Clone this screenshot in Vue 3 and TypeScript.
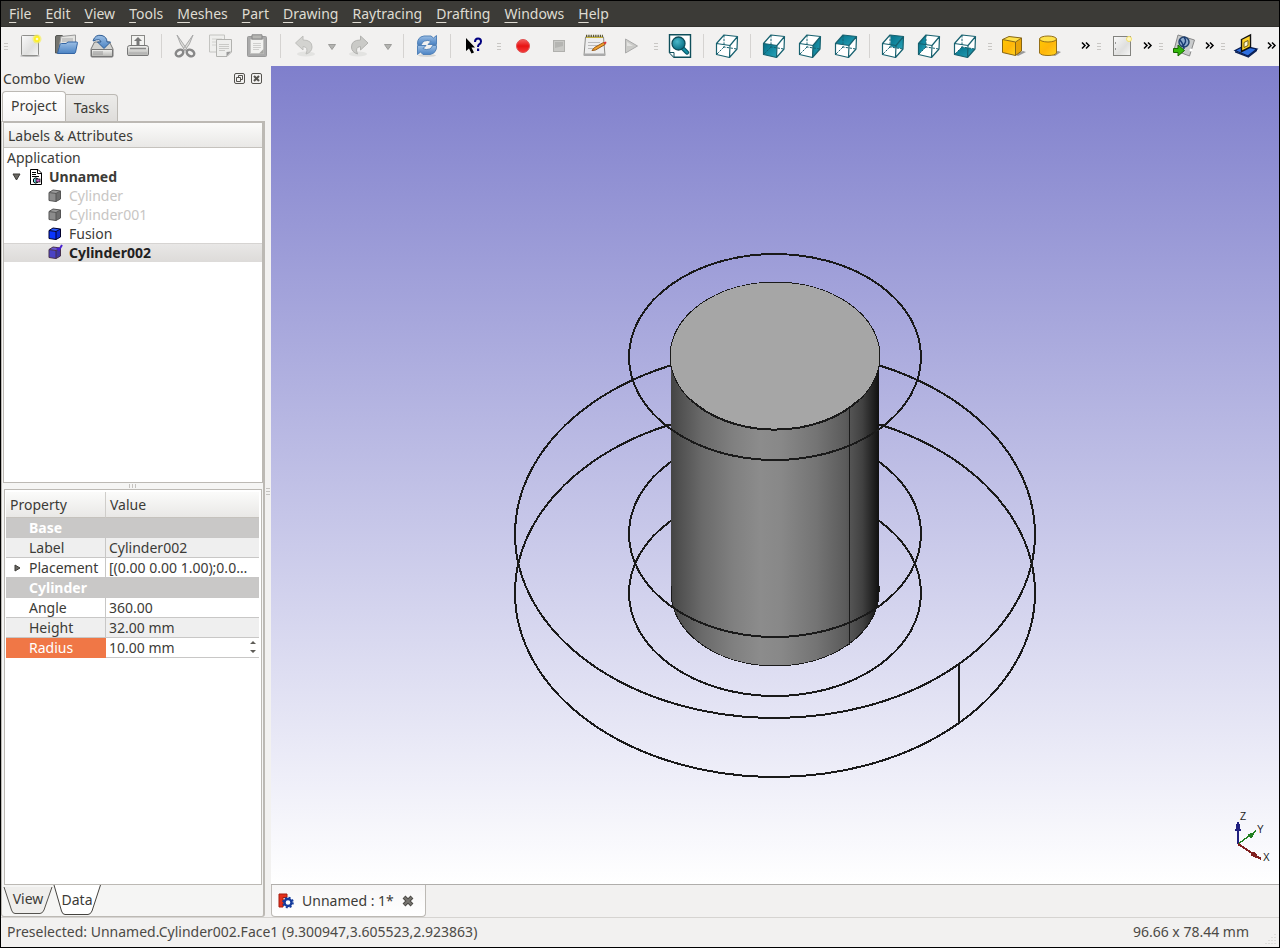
<script setup lang="ts">
import { ref } from 'vue'

type Item = { kind: 'button' | 'sep' | 'handle' | 'drop' | 'more' | 'space'; icon?: string; label?: string }

const b = (icon: string, label: string): Item => ({ kind: 'button', icon, label })
const sep: Item = { kind: 'sep' }
const handle: Item = { kind: 'handle' }
const drop: Item = { kind: 'drop', label: 'History' }
const more: Item = { kind: 'more', label: 'More tools' }

const menus = ['File', 'Edit', 'View', 'Tools', 'Meshes', 'Part', 'Drawing', 'Raytracing', 'Drafting', 'Windows', 'Help']

const mainTools: Item[] = [
  handle, b('new', 'New'), b('open', 'Open'), b('save', 'Save'), b('print', 'Print'), sep,
  b('cut', 'Cut'), b('copy', 'Copy'), b('paste', 'Paste'), sep,
  b('undo', 'Undo'), drop, b('redo', 'Redo'), drop, sep,
  b('refresh', 'Refresh'), sep, b('whats', "What's this?"), handle,
  b('record', 'Record macro'), b('stop', 'Stop macro'), b('macros', 'Macros'), b('play', 'Run macro'), handle,
  b('fit', 'Fit all'), sep, b('axo', 'Axonometric'), sep,
  b('front', 'Front'), b('right', 'Right'), b('top', 'Top'), sep,
  b('rear', 'Rear'), b('left', 'Left'), b('bottom', 'Bottom'),
]
const sideTools: Item[] = [
  handle, b('box', 'Box'), b('cylinder', 'Cylinder'), { kind: 'space' }, more,
  handle, b('page', 'New drawing'), more,
  handle, b('pov', 'Raytracing export'), more,
  handle, b('sketch', 'Sketch'), more,
]

const faces: Record<string, string> = {
  axo: '',
  front: '1.5,9.5 15,11.5 14.5,23.5 1.5,20.5',
  right: '15,11.5 22.5,2.5 22,15 14.5,23.5',
  top: '1.5,9.5 9,1 22.5,2.5 15,11.5',
  rear: '9.5,1 22.5,2.5 22,15 9.5,12.5',
  left: '1.5,9.5 9,1 9,13 1.5,20.5',
  bottom: '9,13 22,15 14.5,23.5 1.5,20.5',
}
const cube = (name: string) =>
  `<path d="M1.5 9.5L9 1L22.5 2.5L22 15L14.5 23.5L1.5 20.5Z" fill="#fff"/>` +
  (faces[name] ? `<polygon points="${faces[name]}" fill="url(#gTeal)"/>` : '') +
  `<path d="M9 1V13L22 15M9 13L1.5 20.5" fill="none" stroke="#17616f" stroke-dasharray="2.5 1.2"/>
  <path d="M1.5 9.5L9 1L22.5 2.5L22 15L14.5 23.5L1.5 20.5ZM1.5 9.5L15 11.5L22.5 2.5M15 11.5L14.5 23.5" fill="none" stroke="#17616f" stroke-width="1.2" stroke-linejoin="round"/>`

const icons: Record<string, string> = {
  new: `<ellipse cx="12" cy="22" rx="10" ry="1" fill="#bbb"/><rect x="3.5" y="1.5" width="17" height="20" rx="1" fill="url(#gPage)" stroke="#8f8f8c"/><circle cx="19" cy="5" r="4.5" fill="#f6ef5c" opacity=".7"/><circle cx="19" cy="5" r="3" fill="#fff022"/><circle cx="19" cy="5" r="1.3" fill="#fffbd0"/>`,
  open: `<path d="M1.5 19V3Q1.500 1.500 3 1.500H8L10 3H20V19Z" fill="#74746f" stroke="#555753"/><path d="M7 2.500L21.500 1V14H5Z" fill="#e4e4e1" stroke="#999"/><path d="M8 5H19M8 7H19" stroke="#aaa"/><path d="M3.500 19.500L6 10.500Q6.300 9.500 7.500 9.500H12L14 8H22.500Q23.800 8 23.400 9.200L21.500 18.500Q21.200 19.500 20 19.500Z" fill="url(#gBlue)" stroke="#3465a4"/>`,
  save: `<path d="M1 15L4.500 8H19.500L23 15V22Q23 23 22 23H2Q1 23 1 22Z" fill="#d3d3d0" stroke="#777"/><path d="M1.500 15.500H22.500V22.500H1.500Z" fill="url(#gMetal)" stroke="#777"/><path d="M4 17V21M6 17V21M8 17V21M10 17V21M12 17V21" stroke="#999"/><path d="M3 7Q5 0 12 1.500Q17 3 17 8H20.500L14 14.500L7.500 8H11Q10.500 4 3 7Z" fill="url(#gBlue)" stroke="#2f5d94"/>`,
  print: `<rect x="5.500" y="1.500" width="13" height="12" fill="#f3f3f1" stroke="#8a8a87"/><path d="M12 3L16 7H13.500V11H10.500V7H8Z" fill="#777"/><path d="M1.500 13.500Q1.500 11.500 4 11.500H20Q22.500 11.500 22.500 13.500V20.500Q22.500 21.500 21 21.500H3Q1.500 21.500 1.500 20.500Z" fill="url(#gMetal)" stroke="#777"/><path d="M4 14.500H20" stroke="#888" stroke-width="1.500"/><path d="M3 19H21" stroke="#aaa"/>`,
  cut: `<path d="M4 1L14.500 16L12.500 17Q7 11 4 1ZM20 1L9.500 16L11.500 17Q17 11 20 1Z" fill="#dededb" stroke="#aaa"/><ellipse cx="6.500" cy="19" rx="4" ry="3" transform="rotate(-30 6.500 19)" fill="none" stroke="#888" stroke-width="2.400"/><ellipse cx="17.500" cy="19" rx="4" ry="3" transform="rotate(30 17.500 19)" fill="none" stroke="#888" stroke-width="2.400"/>`,
  copy: `<path d="M.5 1H15.500V18H.5Z" fill="#efefed" stroke="#c4c4c1"/><path d="M3 5H13M3 8H13M3 11H13" stroke="#d2d2cf"/><path d="M7.500 5.500H22.500V18L18 22.500H7.500Z" fill="#eeeeec" stroke="#b2b2af"/><path d="M10 10.500H20M10 12.500H20M10 14.500H20M10 16.500H16" stroke="#c9c9c6"/><path d="M22 17.500L17.500 22.500V18Z" fill="#999"/>`,
  paste: `<rect x="2.500" y="2.500" width="19" height="20" rx="1" fill="#aaa" stroke="#999"/><path d="M5.500 5.500H18.500V19.500H5.500Z" fill="#f2f2f0" stroke="#c4c4c2"/><path d="M7 .8H17V5H7Z" fill="#b6b6b3" stroke="#888"/><path d="M8 9.500H16M8 11.500H16M8 13.500H16M8 15.500H14" stroke="#cfcfcd"/><path d="M18.500 15L14 19.500H18.500Z" fill="#a5a5a2"/>`,
  undo: `<ellipse cx="14" cy="20" rx="9" ry="2.500" fill="#e3e3e1"/><path d="M3.500 9L11 2V6Q20 6 20 13Q20 18 14 20Q17 13 11 12.500V16Z" fill="#d3d3d0" stroke="#bebebb"/>`,
  redo: `<ellipse cx="10" cy="20" rx="9" ry="2.500" fill="#e3e3e1"/><path d="M20 9L12.500 2V6Q3.500 6 3.500 13Q3.500 18 9.500 20Q6.500 13 12.500 12.500V16Z" fill="#cacac7" stroke="#b2b2af"/>`,
  refresh: `<ellipse cx="12" cy="21.500" rx="9" ry="1.500" fill="#d6d6d4"/><path d="M2.500 10.500Q2 3 9 2H16L18.500 4L21.500 1.500V10.500H13L16 7.500Q13 5.500 9.500 7Q7 8 6.500 10.500Z" fill="url(#gBlue)" stroke="#5282b8"/><path d="M21.500 11.500Q22 19 15 20.500H8L5.500 18L2.500 20.500V11.500H11L8 14.500Q11 16.500 14.500 15Q17 14 17.500 11.500Z" fill="url(#gBlue)" stroke="#5282b8"/>`,
  whats: `<path d="M4 4V17L7 14.500L9.500 19.500L12 18.500L9.500 13.500H13Z" fill="#000"/><path d="M13 8Q13 4.500 16 4.500Q19 4.500 19 7.500Q19 9.500 17 10.500Q16 11.300 16 13" fill="none" stroke="#000080" stroke-width="2"/><rect x="15" y="14.500" width="2.200" height="2.500" fill="#000080"/>`,
  record: `<circle cx="12" cy="12" r="6.500" fill="url(#gRed)" stroke="#e05252"/>`,
  stop: `<rect x="6.500" y="6.500" width="11" height="11" fill="#c9c9c6" stroke="#b0b0ad"/><path d="M8 8H16V12L8 14Z" fill="#b5b5b2"/>`,
  macros: `<path d="M2.500 3H20.500L22 21.500H1Z" fill="#eee" stroke="#8c8c89"/><path d="M1 19.500H22V22H1Z" fill="#aaa"/><path d="M3 2H20" stroke="#5a542c" stroke-width="2.400" stroke-dasharray="1.300 1"/><path d="M3 3.500H20" stroke="#c5b23c"/><path d="M5 8.500H17M5 11.500H15M5 14.500H11" stroke="#bbb"/><path d="M9 16.500L11.500 13.500L20.500 8.500L22 10.500L12.500 16Z" fill="#f3a32b" stroke="#96581a"/><path d="M20.500 8.500L23 7.500L23.500 9L22 10.500Z" fill="#d33"/>`,
  play: `<path d="M6.500 5V19L18.500 12Z" fill="#cbcbc8" stroke="#aaa"/><path d="M8 8L14 12H8Z" fill="#e2e2e0"/>`,
  fit: `<path d="M1.500 .8H22.500V23.200H6L1.500 18.500Z" fill="#fff" stroke="#0f4f5b" stroke-width="1.400"/><path d="M1.500 18.500H6V23" fill="#fff" stroke="#0f4f5b"/><path d="M14.500 14L19 18.500" stroke="#0c5d6d" stroke-width="4.500" stroke-linecap="round"/><path d="M15 14.500L19 18.500" stroke="#1590a5" stroke-width="2" stroke-linecap="round"/><circle cx="10.500" cy="9.500" r="6.500" fill="url(#gBall)" stroke="#0c4b59" stroke-width="1.300"/>`,
  box: `<path d="M14 20L22 17L25 18L17 22Z" fill="#999"/><path d="M1.500 5.500L14.500 8V21.500L1.500 18.500Z" fill="url(#gGold)"/><path d="M14.500 8L20.500 4V17L14.500 21.500Z" fill="#e8a409"/><path d="M1.500 5.500L8 2.500L20.500 4L14.500 8Z" fill="#ffe14a"/><path d="M1.500 5.500L8 2.500L20.500 4V17L14.500 21.500L1.500 18.500ZM1.500 5.500L14.500 8L20.500 4M14.500 8V21.500" fill="none" stroke="#866514" stroke-linejoin="round"/>`,
  cylinder: `<path d="M12 20L21 17L24 18L18 22Z" fill="#999"/><path d="M2.500 5V19Q4 21.500 11 21.500Q18 21.500 19.500 19V5Z" fill="url(#gGold)" stroke="#967017"/><ellipse cx="11" cy="5" rx="8.500" ry="3" fill="#ffe14a" stroke="#967017"/>`,
  page: `<rect x="3.500" y="2.500" width="17" height="19" fill="url(#gPage)" stroke="#83837f"/><path d="M5.500 8V10M5.500 14V16" stroke="#999"/><circle cx="19" cy="5" r="2.500" fill="#fdf8c8" stroke="#f3df68"/>`,
  pov: `<path d="M6 1L22.500 6L17.500 22L2 16Z" fill="#c9cbcc" stroke="#888"/><circle cx="12" cy="8" r="5" fill="#8caace" stroke="#24436d" stroke-width="1.500"/><path d="M12 3Q16 8 10 12.500M8 6Q12 11 12 15" fill="none" stroke="#183b73" stroke-width="1.500"/><circle cx="19" cy="16" r="1.500" fill="#fff"/><path d="M1.500 14.500H6V11L12.500 16.500L6 22V18.500H1.500Z" fill="#32b70a" stroke="#176600"/>`,
  sketch: `<path d="M1 16.500L10 12L23 15L14 22Z" fill="#2e6fe0" stroke="#071d52" stroke-width="1.300"/><path d="M1 17L14 22V23.500L1 18.500ZM14 22L23 15V17L14 24Z" fill="#0c2258"/><path d="M7.500 5.500L16.500 .8V13L7.500 17.500Z" fill="#ffd428" stroke="#111" stroke-width="1.400"/><path d="M10 8.500L14 6.500V11.500L10 13.500Z" fill="#fff9cf" stroke="#6f5d10"/>`,
}
Object.keys(faces).forEach((n) => { icons[n] = cube(n) })

const tree = [
  { name: 'Cylinder', cls: 'hiddenobj', top: '#9a9a9a', front: '#8c8c8c', side: '#6e6e6e', edge: '#555' },
  { name: 'Cylinder001', cls: 'hiddenobj', top: '#9a9a9a', front: '#8c8c8c', side: '#6e6e6e', edge: '#555' },
  { name: 'Fusion', cls: '', top: '#2e5cff', front: '#0a35ff', side: '#0a2bd8', edge: '#00002c' },
  { name: 'Cylinder002', cls: 'selected', top: '#6a5ad0', front: '#4b43c4', side: '#4038a0', edge: '#47304e' },
]
const radius = ref('10.00 mm')
</script>

<template>
  <div class="window">
    <svg class="defs" width="0" height="0" aria-hidden="true">
      <defs>
        <linearGradient id="gTeal" x1="0" y1="0" x2="1" y2="1"><stop offset="0" stop-color="#066f87" /><stop offset=".5" stop-color="#1489a0" /><stop offset="1" stop-color="#2aa3b8" /></linearGradient>
        <linearGradient id="gPage" x1="0" y1="0" x2="1" y2="1"><stop offset="0" stop-color="#fafafa" /><stop offset=".6" stop-color="#dfdfde" /><stop offset="1" stop-color="#f6f6f6" /></linearGradient>
        <linearGradient id="gBlue" x1="0" y1="0" x2="0" y2="1"><stop offset="0" stop-color="#9dbfe4" /><stop offset="1" stop-color="#4b83c4" /></linearGradient>
        <linearGradient id="gMetal" x1="0" y1="0" x2="0" y2="1"><stop offset="0" stop-color="#f2f2f0" /><stop offset="1" stop-color="#b5b5b2" /></linearGradient>
        <linearGradient id="gRed" x1="0" y1="0" x2="0" y2="1"><stop offset="0" stop-color="#f46060" /><stop offset=".5" stop-color="#e81313" /><stop offset="1" stop-color="#f33a3a" /></linearGradient>
        <radialGradient id="gBall" cx=".4" cy=".35" r=".7"><stop offset="0" stop-color="#49b8cb" /><stop offset="1" stop-color="#06697e" /></radialGradient>
        <linearGradient id="gGold" x1="0" y1="0" x2="1" y2="1"><stop offset="0" stop-color="#ffc800" /><stop offset=".5" stop-color="#ffb60a" /><stop offset="1" stop-color="#ffd21e" /></linearGradient>
      </defs>
    </svg>

    <nav class="menubar">
      <button v-for="m in menus" :key="m" type="button"><u>{{ m[0] }}</u>{{ m.slice(1) }}</button>
    </nav>

    <div class="toolbar">
      <div v-for="(group, g) in [mainTools, sideTools]" :key="g" class="group" :class="g ? 'side' : 'primary'">
        <template v-for="(t, i) in group" :key="i">
          <button v-if="t.kind === 'button'" type="button" class="tool" :aria-label="t.label">
            <svg width="24" height="24" viewBox="0 0 24 24" v-html="icons[t.icon!]" />
          </button>
          <button v-else-if="t.kind === 'drop'" type="button" class="drop" :aria-label="t.label">
            <svg width="8" height="6" viewBox="0 0 8 6"><path d="M.5 .5H7.500L4 5.500Z" fill="#b4b4b1" stroke="#9c9c99" /></svg>
          </button>
          <button v-else-if="t.kind === 'more'" type="button" class="more" :aria-label="t.label">
            <svg width="9" height="7" viewBox="0 0 9 7"><path d="M1 .5L4 3.500L1 6.500M5 .5L8 3.500L5 6.500" fill="none" stroke="#000" stroke-width="1.500" /></svg>
          </button>
          <span v-else :class="t.kind"></span>
        </template>
      </div>
    </div>

    <main class="body">
      <aside class="dock">
        <header class="dock-title">
          <span>Combo View</span>
          <button type="button" aria-label="Float">
            <svg width="11" height="11" viewBox="0 0 11 11" fill="none" stroke="#55534e"><rect x=".5" y=".5" width="10" height="10" rx="1.500" /><path d="M4.500 4.500V2.500H8.500V6.500H6.500M2.500 4.500H6.500V8.500H2.500Z" /></svg>
          </button>
          <button type="button" aria-label="Close">
            <svg width="11" height="11" viewBox="0 0 11 11" fill="none" stroke="#55534e"><rect x=".5" y=".5" width="10" height="10" rx="1.500" /><path d="M3 3L8 8M8 3L3 8" stroke-width="2" /></svg>
          </button>
        </header>
        <div class="tabs" role="tablist">
          <button type="button" role="tab" class="tab active" aria-selected="true">Project</button>
          <button type="button" role="tab" class="tab" aria-selected="false">Tasks</button>
        </div>
        <section class="pane">
          <div class="tree" role="tree">
            <div class="head">Labels &amp; Attributes</div>
            <div class="row root" role="treeitem">Application</div>
            <div class="row doc" role="treeitem" aria-expanded="true">
              <svg class="twist" width="9" height="8" viewBox="0 0 9 8"><path d="M1 1H8L4.500 7Z" fill="#6a6863" stroke="#3c3b37" /></svg>
              <svg width="12" height="16" viewBox="0 0 12 16"><path d="M.5 .5H8L11.500 4V15.500H.5Z" fill="#fff" stroke="#000" /><path d="M7.500 1V4.500H11M2 3.500H6M2 5.500H6M2 7.500H9" fill="none" stroke="#000" /><path d="M7.500 9.500Q5 8 3.500 10V13Q5 15 7.500 13.500Z" fill="#6de0e6" stroke="#000" /><rect x="6" y="10" width="4" height="3" fill="#cc66c8" stroke="#000" stroke-width=".7" /></svg>
              <span>Unnamed</span>
            </div>
            <div v-for="o in tree" :key="o.name" class="row obj" :class="o.cls" role="treeitem">
              <svg width="14" height="14" viewBox="0 0 14 14">
                <path d="M1 3.500L8 4.500V12.500L1 11.500Z" :fill="o.front" />
                <path d="M8 4.500L12.500 2V10L8 12.500Z" :fill="o.side" />
                <path d="M1 3.500L5 1L12.500 2L8 4.500Z" :fill="o.top" />
                <path d="M1 3.500L5 1L12.500 2V10L8 12.500L1 11.500ZM1 3.500L8 4.500L12.500 2M8 4.500V12.500" fill="none" :stroke="o.edge" />
                <path v-if="o.cls === 'selected'" d="M9 2L11 4L14 -1" fill="none" stroke="#4a22cf" stroke-width="2" />
              </svg>
              <span>{{ o.name }}</span>
            </div>
          </div>
          <div class="split-h"><i></i><i></i><i></i></div>
          <div class="props">
            <table>
              <colgroup><col class="c1"><col></colgroup>
              <thead><tr><th>Property</th><th>Value</th></tr></thead>
              <tbody>
                <tr class="cat"><td colspan="2">Base</td></tr>
                <tr class="alt"><td>Label</td><td>Cylinder002</td></tr>
                <tr>
                  <td class="expand"><svg width="7" height="8" viewBox="0 0 7 8"><path d="M1 1V7L6 4Z" fill="#6a6863" stroke="#3c3b37" /></svg>Placement</td>
                  <td>[(0.00 0.00 1.00);0.0…</td>
                </tr>
                <tr class="cat"><td colspan="2">Cylinder</td></tr>
                <tr><td>Angle</td><td>360.00</td></tr>
                <tr class="alt"><td>Height</td><td>32.00 mm</td></tr>
                <tr class="edit">
                  <td><label for="radius">Radius</label></td>
                  <td>
                    <div class="spin">
                      <input id="radius" v-model="radius" type="text">
                      <svg width="6" height="12" viewBox="0 0 6 12"><path d="M0 3L3 0L6 3ZM0 9L3 12L6 9Z" fill="#5e5c57" /></svg>
                    </div>
                  </td>
                </tr>
              </tbody>
            </table>
          </div>
          <div class="sheet-tabs" role="tablist">
            <button type="button" role="tab" class="sheet" aria-selected="false">
              <svg width="50" height="29" viewBox="0 0 50 29"><path d="M1 2L8.500 25Q9.500 28.500 12 28.500H37Q39.500 28.500 41 25L49 2" fill="#efeeec" stroke="#55534f" /></svg><span>View</span>
            </button>
            <button type="button" role="tab" class="sheet front" aria-selected="true">
              <svg width="50" height="30" viewBox="0 0 50 30"><path d="M2 0L9.500 26Q10.500 29.500 13 29.500H36Q38.500 29.500 40 26L48.500 0" fill="#fff" stroke="#45433f" /></svg><span>Data</span>
            </button>
          </div>
        </section>
      </aside>
      <div class="split-v"><i></i><i></i><i></i></div>
      <section class="mdi">
        <div class="viewport">
          <svg class="scene" viewBox="0 0 1008 818" shape-rendering="crispEdges" fill="none" stroke="#1a1a1a" stroke-width="2">
            <defs>
              <linearGradient id="gBody">
                <stop offset="0" stop-color="#444" /><stop offset=".04" stop-color="#505050" /><stop offset=".15" stop-color="#6a6a6a" /><stop offset=".3" stop-color="#808080" />
                <stop offset=".43" stop-color="#8c8c8c" /><stop offset=".53" stop-color="#888" /><stop offset=".7" stop-color="#747474" /><stop offset=".84" stop-color="#5b5b5b" />
                <stop offset=".92" stop-color="#414141" /><stop offset="1" stop-color="#101010" />
              </linearGradient>
            </defs>
            <ellipse cx="504" cy="468" rx="260" ry="184" />
            <ellipse cx="504" cy="527" rx="260" ry="184" />
            <path d="M688 599V657" />
            <ellipse cx="504" cy="291" rx="146" ry="103" />
            <ellipse cx="504" cy="468" rx="146" ry="103" />
            <ellipse cx="504" cy="527" rx="146" ry="103" />
            <path d="M400 291V526A104 74 0 0 0 608 526V291Z" fill="url(#gBody)" stroke="none" />
            <path d="M400 520V526A104 74 0 0 0 608 526V520M578 342V579" stroke-width="1" />
            <ellipse cx="504" cy="290" rx="105" ry="74" fill="#a6a6a6" stroke-width="1" />
            <path d="M420 334A105 74 0 0 0 588 334" />
            <path d="M358 291A146 103 0 0 0 650 291M358 468A146 103 0 0 0 650 468" />
          </svg>
          <svg class="axes" width="40" height="56" viewBox="0 0 40 56" shape-rendering="crispEdges">
            <path d="M8 35V14" stroke="#202080" stroke-width="2" /><path d="M5 22L7 13H9L11 22Z" fill="#202080" />
            <path d="M8 35L26 22" stroke="#208020" stroke-width="1.500" /><path d="M17 26L26 22L21 30Z" fill="#208020" />
            <path d="M8 35L31 50" stroke="#802020" stroke-width="2" /><path d="M20 46L24 42L31 51Z" fill="#802020" />
            <g fill="#222"><text x="10" y="11">Z</text><text x="27" y="24">Y</text><text x="33" y="52">X</text></g>
          </svg>
        </div>
        <div class="doc-tabs">
          <div class="doc-tab">
            <svg width="16" height="16" viewBox="0 0 16 16"><path d="M1 1H9V4.500H5V7H8V10H5V14H1Z" fill="#e5301b" stroke="#a31c10" /><circle cx="10" cy="9.500" r="3.500" fill="#fff" stroke="#153c9d" stroke-width="2.400" /><circle cx="10" cy="9.500" r="5" fill="none" stroke="#153c9d" stroke-width="1.600" stroke-dasharray="2 1.930" /></svg>
            <span>Unnamed : 1*</span>
            <button type="button" aria-label="Close document">
              <svg width="12" height="12" viewBox="0 0 12 12"><path d="M2 2L10 10M10 2L2 10" stroke="#4b4945" stroke-width="4" /><path d="M2.500 2.500L9.500 9.500M9.500 2.500L2.500 9.500" stroke="#777570" stroke-width="2" /></svg>
            </button>
          </div>
        </div>
      </section>
    </main>

    <footer class="status">
      <span>Preselected: Unnamed.Cylinder002.Face1 (9.300947,3.605523,2.923863)</span>
      <span>96.66 x 78.44 mm</span>
      <svg class="grip" width="12" height="12" viewBox="0 0 12 12"><path d="M10 1V2M7 4V5M10 4V5M4 7V8M7 7V8M10 7V8M1 10V11M4 10V11M7 10V11M10 10V11" stroke="#cac8c5" /></svg>
    </footer>
  </div>
</template>

<style>
body { margin: 0; }
</style>

<style scoped>
* { box-sizing: border-box; }
button, input { font: inherit; color: inherit; border: 0; background: none; padding: 0; margin: 0; }
svg { display: block; flex: none; overflow: visible; }
.defs { position: absolute; }
.window {
  display: flex; flex-direction: column; height: 100vh; border: 1px solid #000;
  background: #f2f1f0; color: #3c3b37; font: 14px/19px "Noto Sans", "Open Sans", sans-serif;
}
.menubar { display: flex; align-items: center; gap: 2px; height: 26px; flex: none; background: #3c3b37; color: #dfdbd2; border-bottom: 1px solid #32312d; padding-left: 2px; }
.menubar button { padding: 0 6px; white-space: nowrap; }
.menubar u { text-underline-offset: 3px; }
.toolbar { display: flex; justify-content: space-between; height: 39px; flex: none; padding-bottom: 2px; }
.group { display: flex; align-items: center; flex: none; }
.primary { margin-left: -2px; }
.side { margin-right: 2px; }
.tool { display: flex; justify-content: center; width: 36px; }
.drop { display: flex; justify-content: center; width: 20px; padding-top: 2px; }
.more { display: flex; justify-content: center; width: 14px; }
.space { width: 11px; }
.sep { width: 11px; height: 24px; background: linear-gradient(#d5d3d1, #d5d3d1) 5px 0 / 1px 100% no-repeat; }
.handle { width: 13px; height: 8px; background: repeating-linear-gradient(#c9c7c4 0 1px, transparent 1px 3px) 5px 1px / 4px 7px no-repeat; }
.side .handle { width: 12px; }
.body { display: flex; flex: 1; min-height: 0; }
.dock { display: flex; flex-direction: column; width: 264px; flex: none; }
.dock-title { display: flex; align-items: center; gap: 6px; height: 25px; padding: 0 3px 0 2px; flex: none; }
.dock-title span { flex: 1; }
.tabs { display: flex; align-items: flex-end; height: 30px; flex: none; padding-left: 1px; }
.tab { height: 27px; padding: 0 8px 2px; border: 1px solid #bcb9b4; border-bottom: 0; border-left: 0; border-radius: 0 4px 0 0; background: linear-gradient(#ecebe9, #dfdddb); }
.tab.active { height: 30px; border-left: 1px solid #bcb9b4; border-radius: 4px 4px 0 0; background: linear-gradient(#fff, #f7f6f6); }
.pane { display: flex; flex-direction: column; flex: 1; min-height: 0; border: 1px solid #bcb9b4; border-right-width: 2px; border-radius: 0 0 3px 3px; background: #f5f5f4; }
.tree { flex: 362 1 0; margin: 0 0 0 1px; border: 1px solid #bcb9b4; background: #fff; min-height: 0; }
.head { height: 25px; padding: 3px 4px; border-bottom: 1px solid #c5c2bd; background: linear-gradient(#fbfbfa, #e9e8e6); }
.row { display: flex; align-items: center; height: 19px; }
.root { padding-left: 3px; }
.doc { padding-left: 8px; font-weight: bold; gap: 7px; }
.doc .twist { margin-right: 2px; }
.obj { padding-left: 44px; gap: 7px; }
.hiddenobj { color: #c8c6c4; }
.selected { font-weight: bold; background: linear-gradient(#e9e8e7, #dddbd9); color: #22211f; box-shadow: inset 0 1px #d6d4d2; }
.split-h { display: flex; justify-content: center; align-items: center; gap: 2px; height: 6px; flex: none; }
.split-h i { width: 1px; height: 4px; background: #c5c3c0; }
.props { flex: 395 1 0; margin: 0 1px 0 2px; border: 1px solid #bcb9b4; padding: 2px 2px 1px 1px; background: #fff; min-height: 0; }
table { width: 100%; table-layout: fixed; border-collapse: separate; border-spacing: 0; }
.c1 { width: 100px; }
th { height: 26px; padding: 0 4px; text-align: left; font-weight: normal; border-bottom: 1px solid #c5c2bd; background: linear-gradient(#fbfbfa, #e9e8e6); }
th:first-child { border-right: 1px solid #cfcdca; }
td { height: 20px; line-height: 19px; padding: 0 3px; border-bottom: 1px solid #c8c7c6; white-space: nowrap; }
td:first-child { padding: 0 0 0 23px; border-right: 1px solid #c8c7c6; }
.alt td { background: #efefef; }
.cat td { background: #c9c8c7; color: #fff; font-weight: bold; }
.expand svg { float: left; margin: 6px 0 0 -15px; }
.edit td:first-child { background: #f07746; color: #fff; border-color: #f07746; }
.spin { display: flex; align-items: center; justify-content: space-between; height: 19px; }
.spin input { width: 120px; height: 19px; outline: 0; }
.sheet-tabs { display: flex; height: 31px; flex: none; padding-left: 1px; align-items: flex-start; }
.sheet { display: grid; width: 49px; }
.sheet svg, .sheet span { grid-area: 1 / 1; }
.sheet span { align-self: center; z-index: 1; padding-bottom: 2px; }
.split-v { display: flex; flex-direction: column; align-items: center; justify-content: center; gap: 2px; width: 6px; flex: none; }
.split-v i { width: 4px; height: 1px; background: #c5c3c0; }
.mdi { display: flex; flex-direction: column; flex: 1; min-width: 0; }
.viewport { position: relative; flex: 1; min-height: 0; background: linear-gradient(#7f7fcc, #fff); }
.scene { width: 100%; height: 100%; }
.axes { position: absolute; right: 9px; bottom: 19px; font: 10px/10px "Liberation Sans", sans-serif; }
.doc-tabs { height: 33px; flex: none; display: flex; border-top: 1px solid #b0aeab; }
.doc-tab { display: flex; align-items: center; width: 155px; height: 32px; padding: 0 6px; border: 1px solid #bcb9b4; border-top: 0; border-radius: 0 0 4px 4px; background: linear-gradient(#f7f6f6, #fff); }
.doc-tab span { flex: 1; padding-left: 8px; }
.doc-tab button { margin-right: 5px; }
.status { display: flex; align-items: center; height: 30px; flex: none; border-top: 1px solid #d6d4d1; padding: 0 0 2px 6px; color: #4c4a46; }
.status span:first-child { flex: 1; }
.grip { align-self: flex-end; margin: 0 2px 0 16px; }
</style>
